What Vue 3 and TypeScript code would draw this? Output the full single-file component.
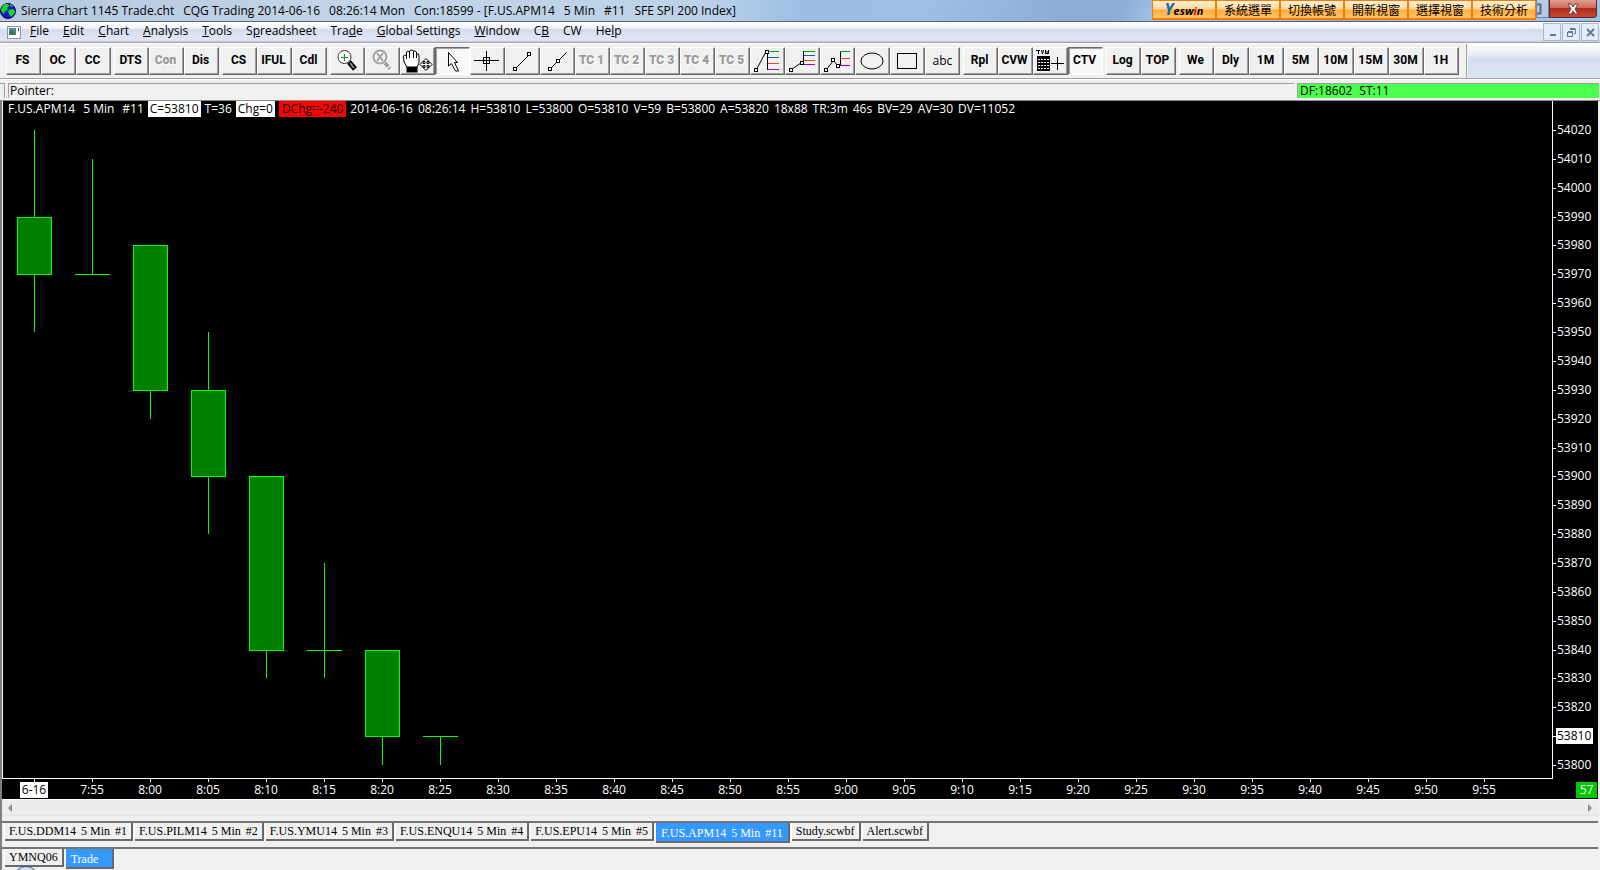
<script setup lang="ts">
interface Candle { open: number; high: number; low: number; close: number }
interface Tool { label: string; icon?: string; disabled?: boolean; pressed?: boolean; plain?: boolean }

const titleParts = [
  'Sierra Chart 1145 Trade.cht',
  'CQG Trading 2014-06-16',
  '08:26:14 Mon',
  'Con:18599 - [F.US.APM14',
  '5 Min',
  '#11',
  'SFE SPI 200 Index]',
]
const shortcuts = ['系統選單', '切換帳號', '開新視窗', '選擇視窗', '技術分析']

const menus: [string, string, string][] = [
  ['', 'F', 'ile'], ['', 'E', 'dit'], ['', 'C', 'hart'], ['', 'A', 'nalysis'], ['', 'T', 'ools'],
  ['S', 'p', 'readsheet'], ['Tra', 'd', 'e'], ['', 'G', 'lobal Settings'], ['', 'W', 'indow'],
  ['C', 'B', ''], ['CW', '', ''], ['He', 'l', 'p'],
]

const t = (label: string, extra: Partial<Tool> = {}): Tool => ({ label, ...extra })
const groups: Tool[][] = [
  [t('FS'), t('OC'), t('CC')],
  [t('DTS'), t('Con', { disabled: true }), t('Dis')],
  [t('CS'), t('IFUL'), t('Cdl')],
  [
    t('Zoom in', { icon: 'zoom' }), t('Zoom off', { icon: 'unzoom', disabled: true }), t('Move', { icon: 'hand' }),
    t('Pointer', { icon: 'pointer', pressed: true }), t('Crosshair', { icon: 'cross' }),
    t('Line', { icon: 'line' }), t('Ray', { icon: 'ray' }),
    t('TC 1', { disabled: true }), t('TC 2', { disabled: true }), t('TC 3', { disabled: true }),
    t('TC 4', { disabled: true }), t('TC 5', { disabled: true }),
    t('Retracement', { icon: 'fib1' }), t('Extension', { icon: 'fib2' }), t('Projection', { icon: 'fib3' }),
    t('Ellipse', { icon: 'ellipse' }), t('Rectangle', { icon: 'rect' }), t('abc', { plain: true }),
  ],
  [t('Rpl'), t('CVW'), t('Values window', { icon: 'tvw' }), t('CTV', { pressed: true })],
  [t('Log'), t('TOP')],
  [t('We'), t('Dly'), t('1M'), t('5M'), t('10M'), t('15M'), t('30M'), t('1H')],
]

const quote = [
  '2014-06-16', '08:26:14', 'H=53810', 'L=53800', 'O=53810', 'V=59', 'B=53800', 'A=53820', '18x88',
  'TR:3m', '46s', 'BV=29', 'AV=30', 'DV=11052',
]

const topPrice = 54020
const lastPrice = 53810
const prices = Array.from({ length: 23 }, (_, i) => topPrice - i * 10)
const yOf = (price: number) => Math.round(29 + ((topPrice - price) / 220) * 635)

const barPitch = 58
const xOf = (i: number) => 31 + i * barPitch
const candles: Candle[] = [
  { open: 53990, high: 54020, low: 53950, close: 53970 },
  { open: 53970, high: 54010, low: 53970, close: 53970 },
  { open: 53980, high: 53980, low: 53920, close: 53930 },
  { open: 53930, high: 53950, low: 53880, close: 53900 },
  { open: 53900, high: 53900, low: 53830, close: 53840 },
  { open: 53840, high: 53870, low: 53830, close: 53840 },
  { open: 53840, high: 53840, low: 53800, close: 53810 },
  { open: 53810, high: 53810, low: 53800, close: 53810 },
]
const times = Array.from({ length: 26 }, (_, i) => {
  if (i === 0) return '6-16'
  const m = 7 * 60 + 50 + i * 5
  return `${Math.floor(m / 60)}:${String(m % 60).padStart(2, '0')}`
})

const chartTabs = [
  ['F.US.DDM14', '5 Min', '#1'], ['F.US.PILM14', '5 Min', '#2'], ['F.US.YMU14', '5 Min', '#3'],
  ['F.US.ENQU14', '5 Min', '#4'], ['F.US.EPU14', '5 Min', '#5'], ['F.US.APM14', '5 Min', '#11'],
  ['Study.scwbf'], ['Alert.scwbf'],
]
const bookTabs = ['YMNQ06', 'Trade']
</script>

<template>
  <div class="window">
    <header class="titlebar">
      <svg class="globe" width="16" height="16" viewBox="0 0 16 16">
        <circle cx="8" cy="8" r="7.5" fill="#1a14d8" stroke="#06063c" />
        <path d="M2 4L5 1H8L9 3L7 5L8 7L5 8L4 11L2 9L1 7ZM9 7L13 6L15 8L14 11L11 14L9 11L8 9ZM10 1L13 3L12 4L10 3Z" fill="#13e01c" />
      </svg>
      <h1 class="title"><span v-for="p in titleParts" :key="p">{{ p }}</span></h1>
      <nav class="shortcuts" aria-label="Yeswin">
        <button type="button" class="brand"><span class="y">Y</span>esw<span class="i">i</span>n</button>
        <button v-for="s in shortcuts" :key="s" type="button">{{ s }}</button>
      </nav>
      <button type="button" class="restore" aria-label="Restore window">
        <svg width="6" height="14" viewBox="0 0 6 14"><path d="M0 2.5H3.500V11.500H0" fill="none" stroke="#5b6a80" stroke-width="2" /></svg>
      </button>
      <button type="button" class="close" aria-label="Close window">
        <svg width="14" height="12" viewBox="0 0 14 12">
          <path d="M2 1H5L7 4L9 1H12L9 6L12 11H9L7 8L5 11H2L5 6Z" fill="#fff" stroke="#6b3a40" stroke-width="1" />
        </svg>
      </button>
    </header>

    <nav class="menubar" aria-label="Main menu">
      <svg class="doc" width="14" height="13" viewBox="0 0 14 13">
        <rect x="0.5" y="0.5" width="13" height="12" fill="#fff" stroke="#8b93a5" />
        <rect x="2" y="2" width="7" height="7" fill="#4a8a9c" />
        <path d="M2 6L5 4L9 8V9H2Z" fill="#3c7a50" />
        <rect x="11" y="2" width="1" height="3" fill="#334" />
      </svg>
      <button v-for="(m, i) in menus" :key="i" type="button" class="menu">{{ m[0] }}<u>{{ m[1] }}</u>{{ m[2] }}</button>
      <div class="mdi">
        <button type="button" aria-label="Minimize chart"><svg width="11" height="11" viewBox="0 0 11 11"><rect x="3" y="7" width="6" height="2" fill="#64788f" /></svg></button>
        <button type="button" aria-label="Restore chart"><svg width="11" height="11" viewBox="0 0 11 11" fill="none" stroke="#64788f"><path d="M4 2.500H9.500V6.500H8M4 1.500H9.500" /><rect x="1.500" y="5.500" width="5" height="4" /><path d="M2 4.500H7" /></svg></button>
        <button type="button" aria-label="Close chart"><svg width="11" height="11" viewBox="0 0 11 11"><path d="M2 2L9 9M9 2L2 9" stroke="#64788f" stroke-width="2" /></svg></button>
      </div>
    </nav>

    <div class="toolrow">
      <div class="toolbar" role="toolbar" aria-label="Tools">
        <div v-for="(g, gi) in groups" :key="gi" class="group">
          <button
            v-for="b in g"
            :key="b.label"
            type="button"
            class="tool"
            :class="{ pressed: b.pressed, plain: b.plain, pic: b.icon }"
            :disabled="b.disabled"
            :aria-label="b.label"
          >
            <template v-if="!b.icon">{{ b.label }}</template>
            <svg v-else width="33" height="26" viewBox="1 1 33 26" fill="none" stroke="#000">
              <template v-if="b.icon === 'zoom'">
                <path d="M19 15L25 22" stroke-width="5" />
                <path d="M20 16L24 21" stroke="#8c8c8c" stroke-width="2" />
                <circle cx="14.500" cy="10" r="6.500" fill="#fff" stroke-width="1" stroke="#333" />
                <path d="M11 10.500H18M14.500 7V14" stroke="#00a000" />
              </template>
              <template v-else-if="b.icon === 'unzoom'">
                <g stroke="#fff" transform="translate(1 1)"><circle cx="15" cy="10" r="6.500" stroke-width="2" /><path d="M20 16L25 22" stroke-width="5" /></g>
                <g stroke="#a0a0a0"><circle cx="15" cy="10" r="6.500" stroke-width="2" /><path d="M12 6L18 14M18 6L12 14" stroke-width="2" /><path d="M20 16L25 22" stroke-width="4" stroke-dasharray="5 1" /></g>
              </template>
              <template v-else-if="b.icon === 'hand'">
                <path d="M7.500 21L4 15L3.500 9L5 8L6.500 9V5L8 4L9.500 5L10 3.500L12 3L13.500 4L15 4L16.500 5V7L18.500 7L19 9V16L16.500 21Z" fill="#fff" />
                <path d="M6.500 8V12M9.500 5V11M13.500 4V11M16.500 6V11" />
                <rect x="7" y="20" width="10" height="5" fill="#000" />
                <path d="M26 11.500L29 14.500H27V16.500H29V14.500L32 17.500L29 20.500V18.500H27V20.500H29L26 23.500L23 20.500H25V18.500H23V20.500L20 17.500L23 14.500V16.500H25V14.500H23Z" fill="#fff" />
              </template>
              <path v-else-if="b.icon === 'pointer'" d="M13.500 5.500V19L16.500 16.500L20.500 24H23.500L19.500 15.500H22.500Z" fill="#fff" />
              <template v-else-if="b.icon === 'cross'">
                <path d="M4 13.500H29M16.500 4V24" shape-rendering="crispEdges" />
                <rect x="13.500" y="10.500" width="6" height="6" />
              </template>
              <template v-else-if="b.icon === 'line'">
                <path d="M10.500 21.500L24.500 7.500" />
                <rect x="8.500" y="20.500" width="3" height="3" fill="#fff" /><rect x="22.500" y="5.500" width="3" height="3" fill="#fff" />
              </template>
              <template v-else-if="b.icon === 'ray'">
                <path d="M10.500 21.500L26.500 5.500" />
                <rect x="8.500" y="20.500" width="3" height="3" fill="#fff" /><rect x="16.500" y="12.500" width="3" height="3" fill="#fff" />
              </template>
              <template v-else-if="b.icon === 'fib1'">
                <path d="M6.500 22.500L15.500 5.500M17.500 5V23" />
                <rect x="4.500" y="21.500" width="3" height="3" fill="#fff" /><rect x="15.500" y="3.500" width="3" height="3" fill="#fff" />
                <path d="M19 4.500H29" stroke="#00a000" /><path d="M18 10.500H29" stroke="#0060c8" /><path d="M18 16.500H29" stroke="#e84c10" /><path d="M18 22.500H29" stroke="#a800c0" />
              </template>
              <template v-else-if="b.icon === 'fib2'">
                <path d="M6.500 22.500L16.500 15.500M18.500 4V17" />
                <rect x="4.500" y="21.500" width="3" height="3" fill="#fff" /><rect x="15.500" y="14.500" width="3" height="3" fill="#fff" />
                <path d="M19 4.500H30" stroke="#00a000" /><path d="M19 8.500H30" stroke="#0060c8" /><path d="M19 13.500H30" stroke="#e84c10" /><path d="M19 17.500H30" stroke="#a800c0" />
              </template>
              <template v-else-if="b.icon === 'fib3'">
                <path d="M6.500 22.500L13.500 13.500L17.500 18.500M20.500 4V18" />
                <rect x="4.500" y="21.500" width="3" height="3" fill="#fff" /><rect x="11.500" y="11.500" width="3" height="3" fill="#fff" /><rect x="16.500" y="17.500" width="3" height="3" fill="#fff" />
                <path d="M20 4.500H30" stroke="#00a000" /><path d="M21 11.500H30" stroke="#e84c10" /><path d="M20 18.500H30" stroke="#a800c0" />
              </template>
              <ellipse v-else-if="b.icon === 'ellipse'" cx="17" cy="14" rx="11" ry="8" />
              <rect v-else-if="b.icon === 'rect'" x="7.500" y="6.500" width="19" height="15" />
              <template v-else-if="b.icon === 'tvw'">
                <path d="M3 3.500H7M5.500 3V7M8.500 3L9.500 7L10.500 3M12.500 3V6.500H15.500V3M14 4V6" />
                <rect x="4" y="9" width="13" height="15" fill="#000" stroke="none" />
                <path d="M5 12.500H16M5 15.500H16M5 18.500H16M5 21.500H16" stroke="#fff" stroke-dasharray="2 1" />
                <path d="M18 16.500H31M24.500 10V23" />
              </template>
            </svg>
          </button>
        </div>
      </div>
      <div class="toolrest"></div>
    </div>

    <div class="statusrow">
      <div class="grip"></div>
      <div class="status">Pointer:</div>
      <div class="feed"><span>DF:18602</span><span>ST:11</span></div>
    </div>

    <div class="workspace">
      <main class="chart">
        <div class="info">
          <div class="sym"><span>F.US.APM14</span><span>5 Min</span><span>#11</span></div>
          <span class="hl">C=53810</span><span class="ticks">T=36</span><span class="hl">Chg=0</span><span class="hl red">DChg=-240</span>
          <div class="quote"><span v-for="q in quote" :key="q">{{ q }}</span></div>
        </div>
        <div class="plotrow">
          <svg class="plot" height="677" shape-rendering="crispEdges" role="img" aria-label="F.US.APM14 5 minute candles">
            <g v-for="(c, i) in candles" :key="i">
              <rect :x="xOf(i)" :y="yOf(c.high)" width="1" :height="yOf(c.low) - yOf(c.high)" fill="#00ff00" />
              <rect v-if="c.open === c.close" :x="xOf(i) - 17" :y="yOf(c.open)" width="35" height="1" fill="#00ff00" />
              <template v-else>
                <rect :x="xOf(i) - 17" :y="yOf(c.open)" width="35" :height="yOf(c.close) - yOf(c.open) + 1" fill="#00ff00" />
                <rect :x="xOf(i) - 16" :y="yOf(c.open) + 1" width="33" :height="yOf(c.close) - yOf(c.open) - 1" fill="#008000" />
              </template>
            </g>
          </svg>
          <svg class="prices" width="45" height="677">
            <g v-for="p in prices" :key="p">
              <rect x="0" :y="yOf(p)" width="3" height="1" fill="#fff" />
              <rect v-if="p === lastPrice" x="3" :y="yOf(p) - 8" width="37" height="16" fill="#fff" />
              <text x="4" :y="yOf(p) + 4" :class="{ dark: p === lastPrice }">{{ p }}</text>
            </g>
          </svg>
        </div>
        <div class="timerow">
          <svg class="times" height="20">
            <g v-for="(label, i) in times" :key="label">
              <rect :x="xOf(i)" y="0" width="1" height="3" fill="#fff" />
              <rect v-if="i === 0" :x="xOf(i) - 14" y="3" width="28" height="16" fill="#fff" />
              <text :x="xOf(i)" y="15" text-anchor="middle" :class="{ dark: i === 0 }">{{ label }}</text>
            </g>
          </svg>
          <output class="count">57</output>
        </div>
      </main>

      <div class="scroll">
        <button type="button" aria-label="Scroll left"><svg width="6" height="8" viewBox="0 0 6 8"><path d="M5 0V8L1 4Z" fill="#8c8c8c" /></svg></button>
        <button type="button" aria-label="Scroll right"><svg width="6" height="8" viewBox="0 0 6 8"><path d="M1 0V8L5 4Z" fill="#8c8c8c" /></svg></button>
      </div>

      <nav class="tabs" aria-label="Charts">
        <button v-for="(tab, i) in chartTabs" :key="i" type="button" class="tab" :class="{ active: i === 5 }">
          <span v-for="part in tab" :key="part">{{ part }}</span>
        </button>
      </nav>
      <nav class="tabs books" aria-label="Chartbooks">
        <button v-for="b in bookTabs" :key="b" type="button" class="tab" :class="{ active: b === 'Trade' }">{{ b }}</button>
        <div class="orb"></div>
      </nav>
    </div>
  </div>
</template>

<style>
body { background: #f0f0f0; overflow: hidden; }
</style>

<style scoped>
* { box-sizing: border-box; }
.window {
  display: flex;
  flex-direction: column;
  min-height: 100vh;
  background: #f0f0f0;
  color: #000;
  font: 12px/16px "Open Sans", "Noto Sans CJK TC", sans-serif;
  white-space: nowrap;
}
button { margin: 0; padding: 0; border: 0; background: none; color: inherit; font: inherit; }

.titlebar {
  display: flex;
  align-items: flex-start;
  height: 22px;
  padding-right: 3px;
  border-bottom: 1px solid #5b6470;
  background:
    linear-gradient(118deg, transparent 58%, rgba(120, 150, 195, 0.45) 66%, rgba(120, 150, 195, 0.45) 70%, transparent 72%, transparent 79%, rgba(120, 150, 195, 0.4) 84%, transparent 90%),
    linear-gradient(90deg, #b4c8de 0, #c2d3e6 20%, #bdd2e9 44%, #9dbfe4 50%, #a0c2e8 100%);
}
.globe { margin: 3px 5px 0 0; }
.title { display: flex; flex: 1; gap: 9px; margin: 0; overflow: hidden; font: inherit; line-height: 21px; }
.shortcuts { display: flex; }
.shortcuts button {
  width: 64px;
  height: 20px;
  border: 1px solid #ff7800;
  border-width: 1px 1px 2px;
  background: linear-gradient(#fff3dc, #ffd898 45%, #ffae3c 55%, #ffc468);
  font: 12px/16px "Noto Sans CJK TC", sans-serif;
}
.shortcuts .brand { font: italic bold 11px/16px "Open Sans", sans-serif; }
.brand .y { color: #0a6cb4; font-size: 16px; }
.brand .i { color: #e00018; }
.restore { width: 13px; height: 18px; border: 1px solid #6f87a8; border-top: 0; background: #b7cce4; text-align: left; line-height: 0; }
.close {
  display: flex;
  align-items: center;
  justify-content: center;
  width: 48px;
  height: 18px;
  border: 1px solid #5c2a30;
  border-top: 0;
  border-radius: 0 0 4px 0;
  background: linear-gradient(#e0a090, #cf6a58 45%, #b52a1c 50%, #c44a34);
}

.menubar {
  display: flex;
  align-items: center;
  height: 21px;
  padding: 0 1px 0 7px;
  border-bottom: 1px solid #a0a0a0;
  background: linear-gradient(#fff, #eef1f9 35%, #d5dcee 36%, #dfe6f5 90%, #c4c9d4);
}
.doc { margin-right: 9px; }
.menu { margin-right: 14px; padding-bottom: 2px; line-height: 16px; }
.mdi { display: flex; gap: 1px; margin-left: auto; }
.mdi button { display: grid; place-items: center; width: 18px; height: 18px; border: 1px solid #a9b9d0; background: #e3ecf8; }

.toolrow { display: flex; height: 36px; border-top: 1px solid #fff; border-bottom: 1px solid #a0a0a0; }
.toolbar { display: flex; gap: 3px; padding: 3px 7px 0 6px; border-right: 1px solid #a0a0a0; }
.toolrest { flex: 1; margin-left: 1px; background: linear-gradient(#fff, #eef1f9 25%, #d5dcee 45%, #dde4f4); }
.group { display: flex; }
.tool {
  display: grid;
  place-items: center;
  width: 35px;
  height: 28px;
  padding: 0 2px 2px 0;
  border: 1px solid;
  border-color: #fff #696969 #696969 #fff;
  background: #f0f0f0;
  box-shadow: inset -1px -1px #a0a0a0;
  font: bold 12px/14px Roboto, "Liberation Sans", sans-serif;
}
.tool.pic { padding: 0; }
.tool:disabled { color: #9a9a9a; font-weight: 900; text-shadow: 1px 1px #fff; }
.tool.plain { padding: 0; font: 12px/14px "Open Sans", sans-serif; }
.tool.pressed { border-color: #696969 #fff #fff #696969; background: #f8f8f8; box-shadow: inset 1px 1px #a0a0a0; }

.statusrow { display: flex; gap: 3px; height: 22px; padding: 3px 1px 2px 0; border-top: 1px solid #fff; border-bottom: 1px solid #8a8a8a; line-height: 14px; }
.grip { width: 5px; border: 1px solid #a0a0a0; border-width: 1px 1px 0 0; }
.status { flex: 1; padding-left: 1px; border: 1px solid #a0a0a0; border-width: 1px 0 0 1px; }
.feed { display: flex; gap: 7px; width: 302px; padding-left: 2px; border: 1px solid #a0a0a0; border-width: 1px 0 0 1px; background: #4dff4d; }

.workspace { display: flex; flex: 1; flex-direction: column; padding-right: 2px; border-left: 2px solid #808080; }
.chart { position: relative; background: #000; color: #fff; }
.info { position: absolute; top: 0; left: 6px; display: flex; gap: 4px; }
.sym { display: flex; gap: 8px; }
.quote { display: flex; gap: 5px; }
.hl { padding: 0 2px; background: #fff; color: #000; }
.hl.red { padding: 0 3px; background: #f00; }
.plotrow { display: flex; }
.plot { display: block; flex: 1; min-width: 0; border: 1px solid #fff; border-width: 0 1px 1px; height: 678px; }
.prices { display: block; }
.timerow { display: flex; }
.times { display: block; flex: 1; min-width: 0; margin-left: 1px; }
.count { width: 21px; height: 16px; margin: 3px 1px 0 0; background: #00c800; text-align: center; }
text { fill: #fff; }
text.dark { fill: #000; }

.scroll { display: flex; justify-content: space-between; height: 17px; padding: 0 5px; border-top: 1px solid #fff; border-bottom: 1px solid #e3e3e3; background: #ececec; }
.scroll button { display: grid; place-items: center; }

.tabs {
  display: flex;
  gap: 2px;
  align-items: flex-start;
  height: 26px;
  margin-top: 5px;
  padding-left: 3px;
  border-top: 2px solid #757575;
  font: 12px/16px "Liberation Serif", serif;
}
.tab { display: flex; gap: 5px; height: 18px; padding: 0 4px; border: 1px solid #696969; border-width: 0 2px 2px 0; box-shadow: -1px 0 #fff; }
.tab.active { height: 20px; padding: 2px 5px 0; background: #3399ff; color: #fff; }
.books { position: relative; flex: 1; height: auto; margin-top: 0; overflow: hidden; }
.books .tab.active { padding-right: 14px; }
.orb { position: absolute; top: 17px; left: 11px; width: 26px; height: 26px; border: 1px solid #34608f; border-radius: 50%; background: linear-gradient(#dcebf7, #8fb8dc); }
</style>
